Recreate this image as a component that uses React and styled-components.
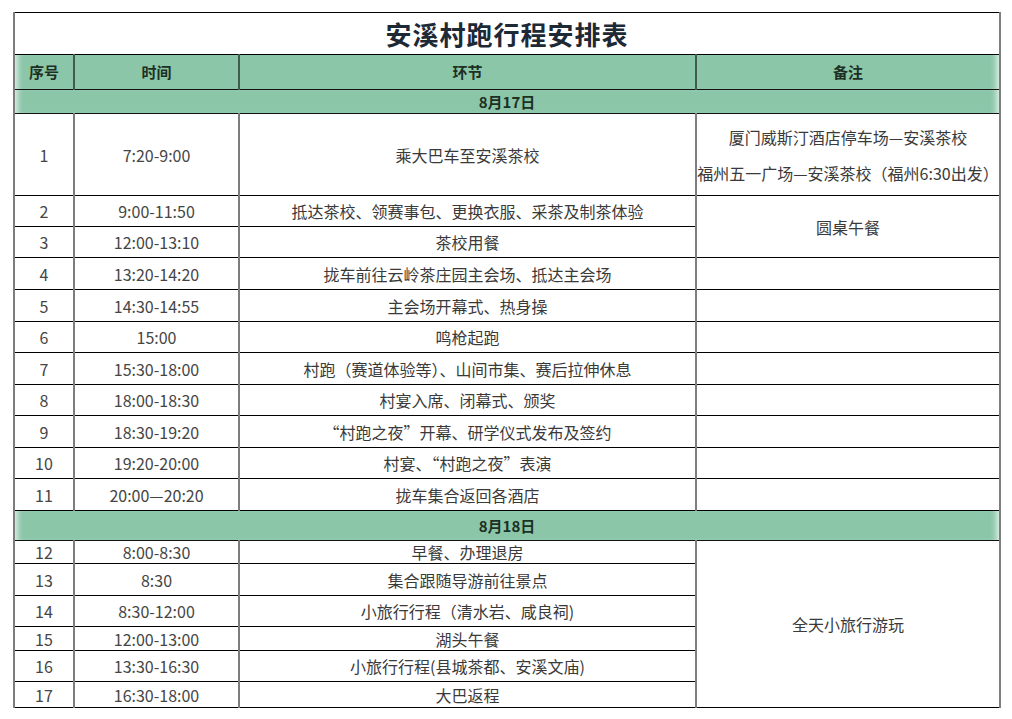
import React from 'react';
import styled, { createGlobalStyle } from 'styled-components';

const GlobalStyle = createGlobalStyle`
  html, body {
    margin: 0;
    padding: 0;
    background: #ffffff;
  }
  body {
    font-family: "Noto Sans CJK SC", "Noto Sans", sans-serif;
  }
`;

const Page = styled.div`
  width: 1012px;
  height: 719px;
  padding: 12px 0 0 13px;
  box-sizing: border-box;
  background: #fff;
  overflow: hidden;
`;

const Table = styled.table`
  width: 986px;
  border-collapse: collapse;
  table-layout: fixed;
  color: #3a3a3a;
  font-size: 16px;
  line-height: 20px;
`;

const Row = styled.tr`
  height: ${(p) => p.$h}px;
`;

const TitleCell = styled.td`
  border: 1px solid #000;
  border-left: 2px solid #7d7d7d;
  border-right: 2px solid #7d7d7d;
  text-align: center;
  font-size: 26px;
  line-height: 30px;
  font-weight: 700;
  color: #1e2936;
  letter-spacing: 1px;
  padding: 0;
`;

const HeadCell = styled.th`
  background: #8bc6a9;
  border-top: 1px solid #111;
  border-bottom: 1px solid #111;
  border-left: 2px solid #3f5c4c;
  border-right: 2px solid #3f5c4c;
  color: #1c3024;
  font-size: 15px;
  font-weight: 700;
  padding: 0;
  &:first-child {
    border-left-color: #7d7d7d;
    box-shadow: inset 7px 0 6px -5px rgba(255, 255, 255, 0.85);
  }
  &:last-child {
    border-right-color: #7d7d7d;
    box-shadow: inset -7px 0 6px -5px rgba(255, 255, 255, 0.85);
  }
`;

const DateCell = styled.td`
  background: #8bc6a9;
  border-top: 1px solid #111;
  border-bottom: 1px solid #111;
  border-left: 2px solid #7d7d7d;
  border-right: 2px solid #7d7d7d;
  box-shadow: inset 7px 0 6px -5px rgba(255, 255, 255, 0.85),
    inset -7px 0 6px -5px rgba(255, 255, 255, 0.85);
  text-align: center;
  color: #1c3024;
  font-size: 15px;
  font-weight: 700;
  padding: 0;
`;

const Cell = styled.td`
  border-top: 1px solid #000;
  border-bottom: 1px solid #000;
  border-left: 2px solid #7d7d7d;
  border-right: 2px solid #7d7d7d;
  text-align: center;
  padding: 0;
  white-space: nowrap;
  overflow: hidden;
  color: ${(p) => (p.$muted ? '#454545' : '#3a3a3a')};
`;

const NoteLine = styled.div`
  line-height: 36px;
  white-space: nowrap;
`;

const columns = [
  { label: '序号', width: 60 },
  { label: '时间', width: 165 },
  { label: '环节', width: 457 },
  { label: '备注', width: 304 },
];

const days = [
  {
    date: '8月17日',
    dateHeight: 24,
    rows: [
      [1, '7:20-9:00', '乘大巴车至安溪茶校', 82],
      [2, '9:00-11:50', '抵达茶校、领赛事包、更换衣服、采茶及制茶体验', 31],
      [3, '12:00-13:10', '茶校用餐', 31],
      [4, '13:20-14:20', '拢车前往云岭茶庄园主会场、抵达主会场', 32],
      [5, '14:30-14:55', '主会场开幕式、热身操', 32],
      [6, '15:00', '鸣枪起跑', 31],
      [7, '15:30-18:00', '村跑（赛道体验等）、山间市集、赛后拉伸休息', 32],
      [8, '18:00-18:30', '村宴入席、闭幕式、颁奖', 31],
      [9, '18:30-19:20', '“村跑之夜”开幕、研学仪式发布及签约', 32],
      [10, '19:20-20:00', '村宴、“村跑之夜”表演', 31],
      [11, '20:00—20:20', '拢车集合返回各酒店', 32],
    ],
  },
  {
    date: '8月18日',
    dateHeight: 30,
    rows: [
      [12, '8:00-8:30', '早餐、办理退房', 23],
      [13, '8:30', '集合跟随导游前往景点', 32],
      [14, '8:30-12:00', '小旅行行程（清水岩、咸良祠)', 31],
      [15, '12:00-13:00', '湖头午餐', 24],
      [16, '13:30-16:30', '小旅行行程(县城茶都、安溪文庙)', 31],
      [17, '16:30-18:00', '大巴返程', 26],
    ],
  },
];

// notes keyed by row number; rows covered by a rowSpan are skipped
const notes = {
  1: {
    lines: ['厦门威斯汀酒店停车场—安溪茶校', '福州五一广场—安溪茶校（福州6:30出发）'],
  },
  2: { span: 2, lines: ['圆桌午餐'] },
  3: { skip: true },
  12: { span: 6, lines: ['全天小旅行游玩'] },
  13: { skip: true },
  14: { skip: true },
  15: { skip: true },
  16: { skip: true },
  17: { skip: true },
};

const NoteCell = ({ no }) => {
  const note = notes[no];
  if (note && note.skip) return null;
  if (!note) return <Cell />;
  return (
    <Cell rowSpan={note.span || 1}>
      {note.lines.map((line) => (
        <NoteLine key={line}>{line}</NoteLine>
      ))}
    </Cell>
  );
};

const App = () => {
  return (
    <Page>
      <GlobalStyle />
      <Table>
        <colgroup>
          {columns.map((c) => (
            <col key={c.label} style={{ width: c.width }} />
          ))}
        </colgroup>
        <tbody>
          <Row $h={42}>
            <TitleCell colSpan={4}>安溪村跑行程安排表</TitleCell>
          </Row>
          <Row $h={35}>
            {columns.map((c) => (
              <HeadCell key={c.label}>{c.label}</HeadCell>
            ))}
          </Row>
          {days.map((day) => (
            <React.Fragment key={day.date}>
              <Row $h={day.dateHeight}>
                <DateCell colSpan={4}>{day.date}</DateCell>
              </Row>
              {day.rows.map(([no, time, item, h]) => (
                <Row key={no} $h={h}>
                  <Cell $muted>{no}</Cell>
                  <Cell $muted>{time}</Cell>
                  <Cell>{item}</Cell>
                  <NoteCell no={no} />
                </Row>
              ))}
            </React.Fragment>
          ))}
        </tbody>
      </Table>
    </Page>
  );
};

export default App;
